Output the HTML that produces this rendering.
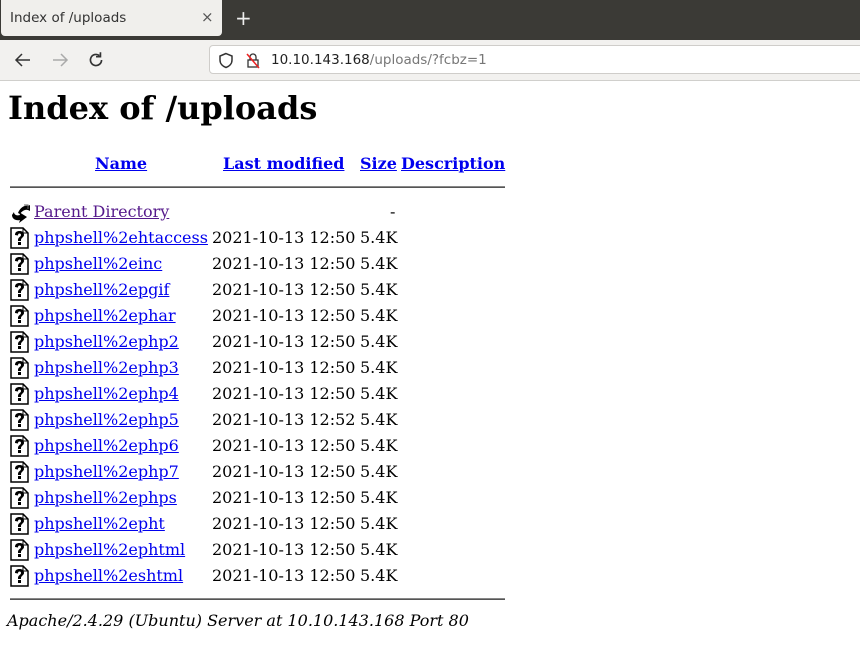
<!DOCTYPE html>
<html><head><meta charset="utf-8"><style>
body{margin:0;width:860px;height:648px;overflow:hidden;background:#fff;position:relative;font-family:"DejaVu Serif","Liberation Serif",serif;font-size:16px;color:#000}
.tabbar{position:absolute;left:0;top:0;width:860px;height:40px;background:#3b3a36}
.tab{position:absolute;left:1px;top:0;width:221px;height:36px;background:#f0efec;border-radius:0 0 4px 4px;font-family:"DejaVu Sans","Liberation Sans",sans-serif;font-size:13.5px;color:#333}
.toolbar{position:absolute;left:0;top:40px;width:860px;height:40px;background:#f2f1ef;border-bottom:1px solid #d0cfcc}
.url{position:absolute;left:209px;top:5px;width:660px;height:29px;background:#fff;border:1px solid #cfcdca;border-radius:4px;box-sizing:border-box;font-family:"DejaVu Sans","Liberation Sans",sans-serif;font-size:13.5px}
.a{position:absolute;white-space:nowrap}
a{color:#0000ee;text-decoration:underline}
a.v{color:#551a8b}
h1{position:absolute;left:8px;top:89px;margin:0;font-size:32px;font-weight:bold;white-space:nowrap}
.hr{position:absolute;left:10px;width:495px;height:0;border-top:1px solid #888;border-bottom:1px solid #555}
.th{font-weight:bold}
.ic{position:absolute;left:10px;width:19px;height:22px}
</style></head><body>
<div class="tabbar">
 <div class="tab"><span class="a" style="left:9px;top:10px">Index of /uploads</span><span class="a" style="left:200px;top:8px;font-size:15px;color:#555">×</span></div>
 <span class="a" style="left:235px;top:6px;color:#eee;font-family:'DejaVu Sans',sans-serif;font-size:20px">+</span>
</div>
<div class="toolbar">
 <svg class="a" style="left:14px;top:12px" width="18" height="16" viewBox="0 0 18 16"><path d="M16 8H2M8 2L2 8l6 6" fill="none" stroke="#333" stroke-width="1.5"/></svg>
 <svg class="a" style="left:51px;top:12px" width="18" height="16" viewBox="0 0 18 16"><path d="M2 8h14M10 2l6 6-6 6" fill="none" stroke="#aaa" stroke-width="1.5"/></svg>
 <svg class="a" style="left:86px;top:10px" width="20" height="20" viewBox="0 0 18 18"><path d="M14 9a5 5 0 1 1-2-4M13 2v4h-4" fill="none" stroke="#333" stroke-width="1.5"/></svg>
 <div class="url">
  <svg class="a" style="left:8px;top:6px" width="16" height="17" viewBox="0 0 16 17"><path d="M8 1.5L2 4v4c0 4 3 6.5 6 7.5 3-1 6-3.5 6-7.5V4z" fill="none" stroke="#333" stroke-width="1.5"/></svg>
  <svg class="a" style="left:35px;top:6px" width="16" height="17" viewBox="0 0 16 17"><rect x="3" y="8" width="10" height="7" fill="none" stroke="#333" stroke-width="1.3"/><path d="M5 8V5a3 3 0 0 1 6 0v3" fill="none" stroke="#333" stroke-width="1.3"/><path d="M2 2l12 14" stroke="#e22" stroke-width="1.5"/></svg>
  <span class="a" style="left:61px;top:6px;color:#222">10.10.143.168<span style="color:#777">/uploads/?fcbz=1</span></span>
 </div>
</div>
<h1>Index of /uploads</h1>
<div class="a th" style="left:95px;top:154px"><a href="#">Name</a></div>
<div class="a th" style="left:223px;top:154px"><a href="#">Last modified</a></div>
<div class="a th" style="left:360px;top:154px"><a href="#">Size</a></div>
<div class="a th" style="left:401px;top:154px"><a href="#">Description</a></div>
<div class="hr" style="top:186px"></div>

<svg class="ic" style="top:201px;width:22px" viewBox="0 0 22 22"><path d="M2 14c0 4 4 6 8 5l-1 3 8-6-8-5 1 3c-3 1-6 0-6-3z" fill="#000"/><path d="M8 12c2-5 6-8 10-7l2-1v6l-2-1c-3-1-6 1-8 4z" fill="#000"/><path d="M14 4h4v4" fill="none" stroke="#666"/></svg>
<div class="a" style="left:34px;top:202px"><a class="v" href="#">Parent Directory</a></div>
<div class="a" style="left:390px;top:202px">-</div>

<div id="rows"></div>
<script>
var r=[["phpshell%2ehtaccess","12:50"],["phpshell%2einc","12:50"],["phpshell%2epgif","12:50"],["phpshell%2ephar","12:50"],["phpshell%2ephp2","12:50"],["phpshell%2ephp3","12:50"],["phpshell%2ephp4","12:50"],["phpshell%2ephp5","12:52"],["phpshell%2ephp6","12:50"],["phpshell%2ephp7","12:50"],["phpshell%2ephps","12:50"],["phpshell%2epht","12:50"],["phpshell%2ephtml","12:50"],["phpshell%2eshtml","12:50"]];
var h="";
r.forEach(function(x,i){var t=228+26*i;
h+='<svg class="ic" style="top:'+(t-1)+'px" viewBox="0 0 19 22"><path d="M1 1h12l5 5v15H1z" fill="#fff" stroke="#000" stroke-width="1.5"/><path d="M13 1v5h5" fill="none" stroke="#000"/><path d="M5 8c0-3 2-4 4.5-4S14 5 14 8c0 2-3 3-3 5v1H8v-1c0-3 3-3 3-5 0-1-.5-1.5-1.5-1.5S8 7 8 8.5z" fill="#000"/><rect x="8" y="15" width="3" height="3" fill="#000"/></svg>';
h+='<div class="a" style="left:34px;top:'+t+'px"><a href="#">'+x[0]+'</a></div>';
h+='<div class="a" style="left:212px;top:'+t+'px">2021-10-13 '+x[1]+'</div>';
h+='<div class="a" style="left:360px;top:'+t+'px">5.4K</div>';});
document.getElementById("rows").innerHTML=h;
</script>
<div class="hr" style="top:598px"></div>
<div class="a" style="left:7px;top:611px;font-style:italic">Apache/2.4.29 (Ubuntu) Server at 10.10.143.168 Port 80</div>
</body></html>
